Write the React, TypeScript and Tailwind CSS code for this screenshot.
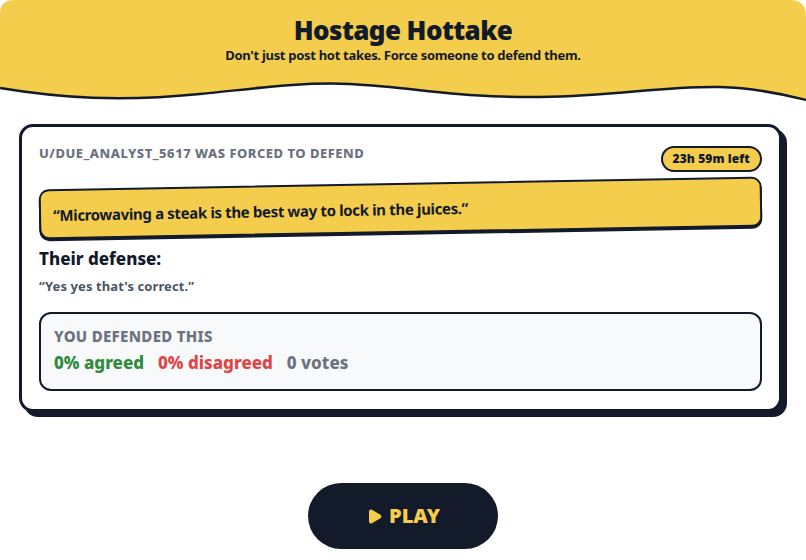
import { Play } from 'lucide-react';

const font = { fontFamily: '"Noto Sans", "Open Sans", sans-serif' };

function Header() {
  return (
    <header className="relative h-[104px] text-[#131a2a]">
      {/* yellow banner with a wavy bottom edge */}
      <svg className="absolute inset-0 w-full h-full" viewBox="0 0 806 104" preserveAspectRatio="none">
        <path
          d="M0,14 Q0,0 14,0 L790,0 Q806,0 806,16 L806,100 C790,96 760,88 720,87 C660,86 620,96 540,97 C460,98 420,88 350,84 C300,82 260,88 200,94 C120,102 60,98 0,88 Z"
          fill="#f3cd4b"
        />
        <path
          d="M806,100 C790,96 760,88 720,87 C660,86 620,96 540,97 C460,98 420,88 350,84 C300,82 260,88 200,94 C120,102 60,98 0,88"
          fill="none"
          stroke="#131a2a"
          strokeWidth="2.5"
        />
      </svg>
      <div className="relative flex flex-col items-center pt-[13px]">
        <h1 className="text-[26px] leading-[34px] font-black tracking-[-0.6px]">Hostage Hottake</h1>
        <p className="text-[13px] leading-[18px] font-bold -mt-[1px] tracking-[-0.3px]">Don't just post hot takes. Force someone to defend them.</p>
      </div>
    </header>
  );
}

function ResultCard() {
  return (
    <div className="ml-[19px] mr-[24px] mt-[20px] bg-white border-[3px] border-[#131a2a] rounded-[14px] shadow-[5px_5px_0_#131a2a] pl-[17px] pr-[17px] pt-[15px] pb-[18px]">
      <div className="flex items-start justify-between">
        <div className="text-[13px] font-extrabold text-[#6b7280] uppercase mt-[2px] tracking-[0.5px]">u/due_analyst_5617 was forced to defend</div>
        <span className="mt-[4px] px-[10px] h-[26px] flex items-center rounded-full bg-[#f3cd4b] border-2 border-[#131a2a] text-[12px] font-black text-[#131a2a] tracking-[0.1px]">
          23h 59m left
        </span>
      </div>

      <div className="mt-[11px] -rotate-[1deg] bg-[#f3cd4b] border-2 border-[#131a2a] rounded-[10px] px-[12px] h-[50px] flex items-center shadow-[0_2px_0_#131a2a]">
        <p className="text-[15px] font-bold text-[#131a2a] tracking-[-0.35px] mt-[2px]">“Microwaving a steak is the best way to lock in the juices.”</p>
      </div>

      <h2 className="mt-[14px] text-[17px] leading-[24px] font-extrabold text-[#131a2a]">Their defense:</h2>
      <p className="mt-[5px] text-[13px] leading-[20px] font-bold text-[#4b5563] tracking-[0.1px]">“Yes yes that's correct.”</p>

      <div className="mt-[16px] bg-[#f8f9fb] border-2 border-[#131a2a] rounded-[12px] px-[13px] pt-[12px] pb-[15px]">
        <div className="text-[15px] font-extrabold text-[#6b7280] uppercase leading-[20px] tracking-[0.3px]">You defended this</div>
        <div className="mt-[6px] flex gap-[14px] text-[17px] font-extrabold leading-[22px]">
          <span className="text-[#2f8a3c]">0% agreed</span>
          <span className="text-[#e04444]">0% disagreed</span>
          <span className="text-[#6b7280]">0 votes</span>
        </div>
      </div>
    </div>
  );
}

export default function App() {
  return (
    <div className="w-[806px] h-[560px] bg-white overflow-hidden" style={font}>
      <Header />
      <ResultCard />
      <div className="flex justify-center mt-[71px]">
        <button className="w-[190px] h-[66px] rounded-full bg-[#131a2a] text-[#f3cd4b] flex items-center justify-center gap-[6px] text-[20px] font-black">
          <Play size={17} fill="#f3cd4b" strokeWidth={1.5} strokeLinejoin="round" />
          PLAY
        </button>
      </div>
    </div>
  );
}
